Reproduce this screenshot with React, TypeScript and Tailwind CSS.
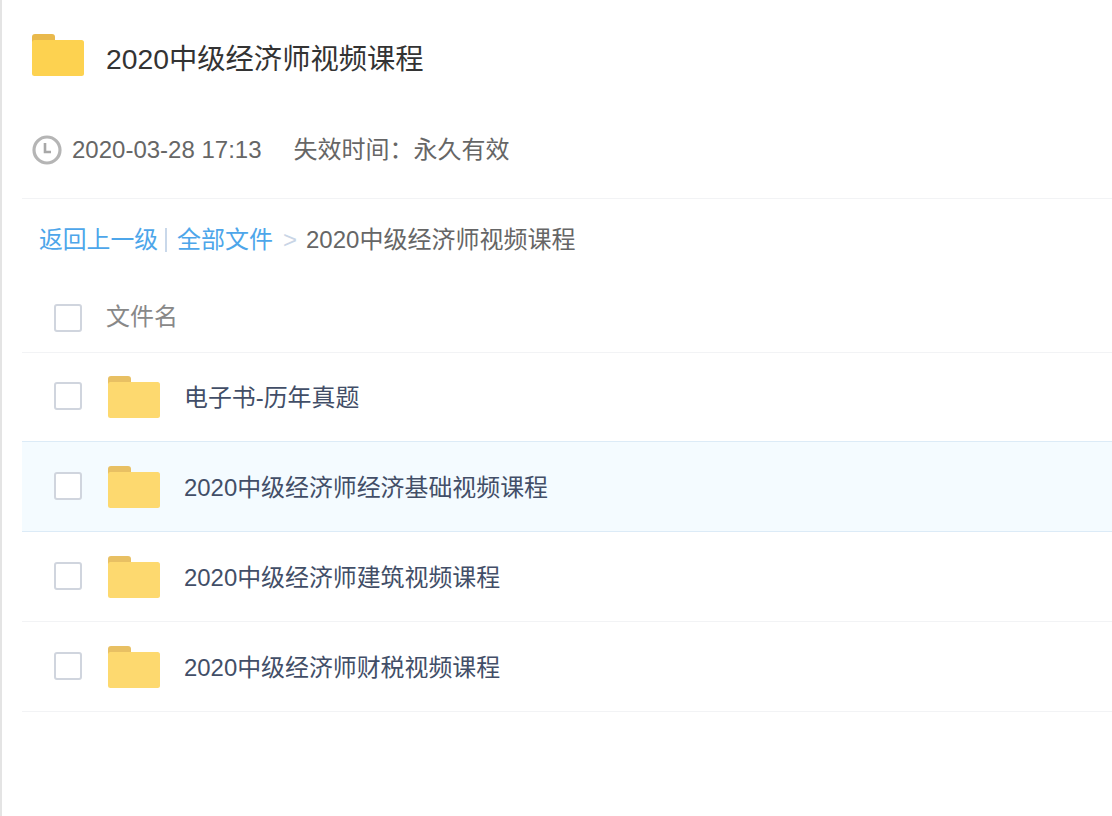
const cjk = "font-['Liberation_Sans','Noto_Sans_CJK_SC',sans-serif]";

function Folder({ body, tab, className }: { body: string; tab: string; className: string }) {
  return (
    <svg viewBox="0 0 52 42" className={className}>
      <path d="M0 3a3 3 0 0 1 3-3h17a3 3 0 0 1 3 3v5H0z" fill={tab} />
      <rect x="0" y="6" width="52" height="36" rx="2.5" fill={body} />
    </svg>
  );
}

function Checkbox({ className = "" }: { className?: string }) {
  return <span className={`block w-[28px] h-[28px] rounded-[3px] border-2 border-[#d0d5de] bg-white shrink-0 ${className}`} />;
}

const rows = [
  { name: "电子书-历年真题", next: true },
  { name: "2020中级经济师经济基础视频课程", active: true },
  { name: "2020中级经济师建筑视频课程" },
  { name: "2020中级经济师财税视频课程" },
];

export default function App() {
  return (
    <div className={`${cjk} w-[1112px] h-[816px] overflow-hidden bg-white border-l-2 border-[#e4e4e4] pl-[20px]`}>
      {/* header */}
      <div className="flex items-center h-[116px] pl-[10px] pb-[2px]">
        <Folder body="#fdd250" tab="#e9b94c" className="w-[52px] h-[42px] mr-[22px] mb-[4px]" />
        <h1 className="text-[28.3px] leading-[40px] mt-[4px] text-[#333] font-normal">2020中级经济师视频课程</h1>
      </div>

      <div className="flex items-center h-[83px] pb-[14px] pl-[10px] border-b border-[#f2f3f5] text-[24px] text-[#666]">
        <svg viewBox="0 0 30 30" className="w-[30px] h-[30px] mr-[10px]">
          <circle cx="15" cy="15" r="13" fill="none" stroke="#b5b5b5" strokeWidth="3.2" />
          <path d="M13 8v9h6" fill="none" stroke="#a8a8a8" strokeWidth="2.6" />
        </svg>
        <span>2020-03-28 17:13</span>
        <span className="ml-[32px]">失效时间：永久有效</span>
      </div>

      {/* breadcrumb */}
      <div className="flex items-center h-[80px] pl-[17px] pt-[2px] text-[24px] text-[#666]">
        <span className="text-[#4da6ea] text-[23.8px]">返回上一级</span>
        <span className="ml-[7px] mr-[10px] w-[2px] h-[24px] bg-[#c9d8ea]" />
        <span className="text-[#4da6ea]">全部文件</span>
        <span className="ml-[10px] mr-[9px] text-[#c9d5e6]">&gt;</span>
        <span>2020中级经济师视频课程</span>
      </div>

      {/* list */}
      <div className="flex items-center h-[74px] pl-[32px] pt-[4px] border-b border-[#f2f3f5]">
        <Checkbox />
        <span className="ml-[24px] mb-[2px] text-[24px] text-[#888]">文件名</span>
      </div>
      {rows.map((r) => (
        <div
          key={r.name}
          className={`flex items-center ${r.next ? "h-[89px]" : "h-[90px]"} pl-[32px] border-b ${
            r.active ? "bg-[#f4fbff] border-[#dcebf7]" : r.next ? "border-[#dcebf7]" : "border-[#f2f3f5]"
          }`}
        >
          <Checkbox className="mb-[2px]" />
          <Folder body="#fdd96f" tab="#e8c063" className="w-[52px] h-[42px] ml-[26px] mr-[24px]" />
          <span className="text-[23.92px] mt-[2px] text-[#424e67]">{r.name}</span>
        </div>
      ))}
    </div>
  );
}
